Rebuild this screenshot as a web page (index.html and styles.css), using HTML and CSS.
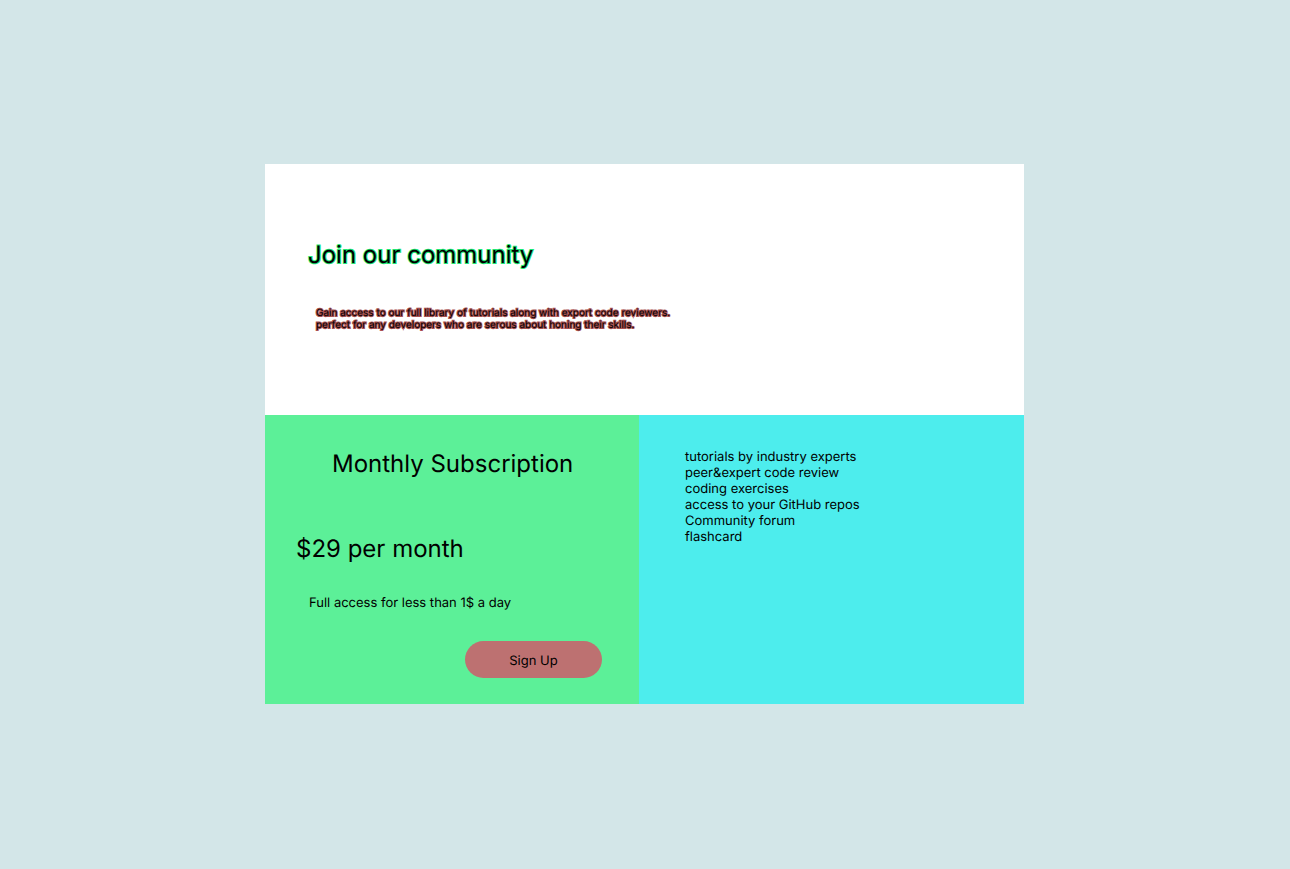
FILE: index.html
```html
<!DOCTYPE html>
<html lang="en">
<head>
<meta charset="utf-8">
<title>Join our community</title>
<link rel="stylesheet" href="styles.css">
</head>
<body>
<main class="card">
  <section class="intro">
    <h1 class="intro-title">Join our community</h1>
    <p class="intro-text">Gain access to our full library of tutorials along with export code reviewers.<br>perfect for any developers who are serous about honing their skills.</p>
  </section>
  <section class="plan">
    <h2 class="plan-title">Monthly Subscription</h2>
    <p class="plan-price">$29 per month</p>
    <p class="plan-note">Full access for less than 1$ a day</p>
    <button class="signup" type="button">Sign Up</button>
  </section>
  <section class="benefits">
    <ul class="benefit-list">
      <li>tutorials by industry experts</li>
      <li>peer&amp;expert code review</li>
      <li>coding exercises</li>
      <li>access to your GitHub repos</li>
      <li>Community forum</li>
      <li>flashcard</li>
    </ul>
  </section>
</main>
</body>
</html>
```
FILE: styles.css
```css
* {
  box-sizing: border-box;
}

body {
  margin: 0;
  min-height: 100vh;
  padding: 0 1px 1px 0;
  display: flex;
  align-items: center;
  justify-content: center;
  background: #d3e6e8;
  color: #000;
  font: 400 13px/16px Inter, sans-serif;
  text-rendering: geometricPrecision;
}

h1, h2, p, ul {
  margin: 0;
  padding: 0;
  font-weight: 400;
}

.card {
  width: 100%;
  max-width: 759px;
  display: grid;
  grid-template-columns: 374fr 385fr;
}

.intro {
  grid-column: 1 / -1;
  padding: 76px 43px 84px;
  background: #fff;
}

.intro-title {
  font-size: 24px;
  line-height: 29px;
  -webkit-text-stroke: 2px #1fe874;
  paint-order: stroke fill;
}

.intro-text {
  margin: 38px 0 0 8px;
  font-size: 10px;
  line-height: 12px;
  -webkit-text-stroke: 2px #a85050;
  paint-order: stroke fill;
}

.plan {
  display: flex;
  flex-direction: column;
  padding: 34px 31px 26px;
  background: #5cf098;
}

.plan-title {
  margin-left: 36px;
  font-size: 24px;
  line-height: 29px;
}

.plan-price {
  margin-top: 56px;
  font-size: 24px;
  line-height: 29px;
}

.plan-note {
  margin: 32px 0 0 13px;
}

.signup {
  align-self: flex-end;
  width: 137px;
  height: 37px;
  margin: 30px 6px 0 0;
  padding: 2px 6px 0;
  border: 0;
  border-radius: 20px;
  background: #bd7171;
  color: #000;
  font: inherit;
  text-rendering: inherit;
}

.benefits {
  padding: 34px 46px;
  background: #4deded;
}

.benefit-list {
  list-style: none;
}
```
